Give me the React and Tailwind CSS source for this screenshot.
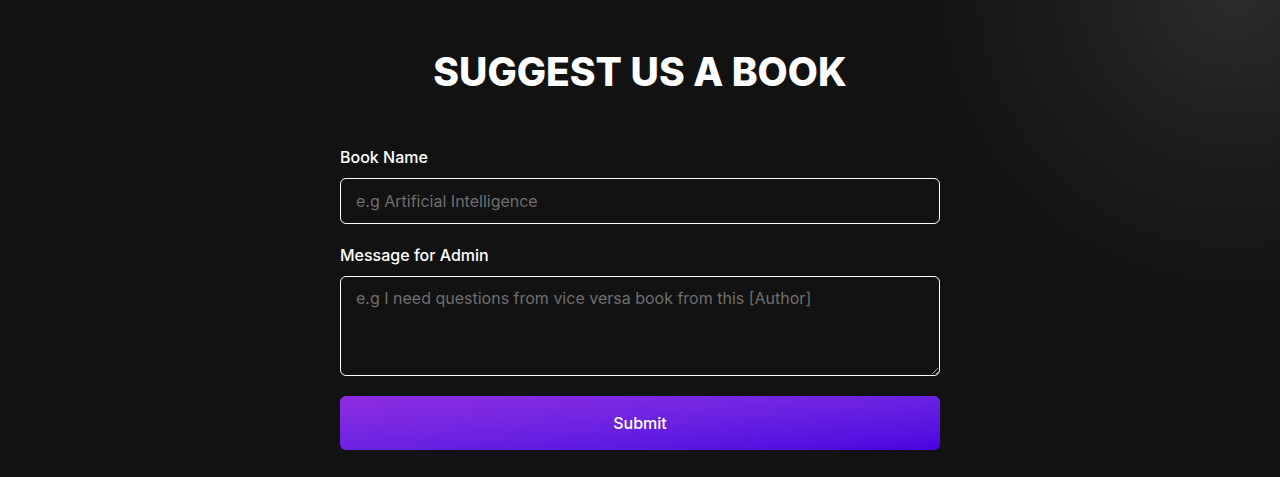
import React, { useState } from "react";

// Suggest-a-book form: dark page, white outlined fields, purple gradient submit

export default function App() {
  const [book, setBook] = useState("");
  const [message, setMessage] = useState("");

  return (
    <div
      className="min-h-screen w-full bg-[#121212] bg-[radial-gradient(circle_at_1235px_-10px,rgba(255,255,255,0.11),rgba(255,255,255,0.04)_180px,transparent_330px)] text-white"
      style={{ fontFamily: "Inter, 'Noto Sans', sans-serif" }}
    >
      <div className="mx-auto flex w-[600px] flex-col pt-[42px]">
        <h1 className="text-center text-[39px] font-extrabold leading-[60px] text-white">
          SUGGEST US A BOOK
        </h1>

        <form className="mt-[43px] flex flex-col" onSubmit={(e) => e.preventDefault()}>
          <label className="mb-[9px] text-base font-medium leading-6 text-white">Book Name</label>
          <input
            type="text"
            value={book}
            onChange={(e) => setBook(e.target.value)}
            placeholder="e.g Artificial Intelligence"
            className="h-[46px] w-full rounded-md border border-white bg-transparent px-[15px] text-base text-white outline-none placeholder:text-[#6e6e6e]"
          />

          <label className="mb-[9px] mt-[19px] text-base font-medium leading-6 text-white">Message for Admin</label>
          <textarea
            value={message}
            onChange={(e) => setMessage(e.target.value)}
            placeholder="e.g I need questions from vice versa book from this [Author]"
            className="h-[100px] w-full rounded-md border border-white bg-transparent px-[15px] py-[9px] text-base leading-6 text-white outline-none placeholder:text-[#6e6e6e]"
          />

          <button
            type="submit"
            className="mt-[20px] h-[54px] w-full rounded-md bg-linear-to-br from-[#8e2de2] to-[#4a00e0] text-base font-medium text-white"
          >
            Submit
          </button>
        </form>
      </div>
    </div>
  );
}
